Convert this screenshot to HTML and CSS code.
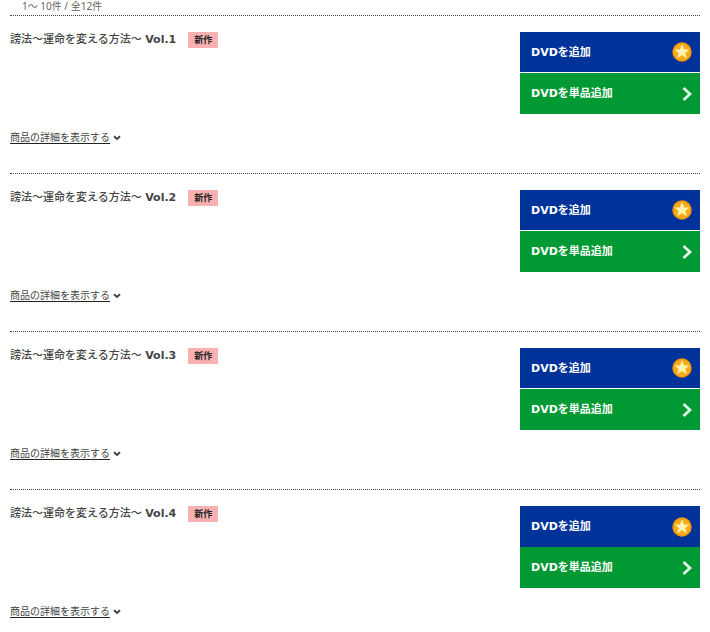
FILE: index.html
```html
<!DOCTYPE html>
<html lang="ja">
<head>
  <meta charset="UTF-8" />
  <meta name="viewport" content="width=device-width, initial-scale=1.0"/>
  <title>DVD一覧</title>
  <link rel="stylesheet" href="styles.css">
</head>
<body>
  <svg class="sprite" aria-hidden="true">
    <symbol id="icon-star" viewBox="0 0 20 20">
      <circle cx="10" cy="10" r="9.7" fill="#f39a0b"/>
      <circle cx="10" cy="10" r="8" fill="#fbac1c"/>
      <path d="M10 2.6l2.1 5h5.3l-4.2 3.4 1.6 5.2-4.8-3.1-4.8 3.1 1.6-5.2-4.2-3.4h5.3z" fill="#fff3b0"/>
    </symbol>
    <symbol id="icon-next" viewBox="0 0 10 14">
      <path d="M1.5 1L8 7l-6.5 6" fill="none" stroke="#e0f5e4" stroke-width="2.8"/>
    </symbol>
    <symbol id="icon-down" viewBox="0 0 8 6">
      <path d="M1 1.2l3 2.8 3-2.8" fill="none" stroke="#444" stroke-width="2"/>
    </symbol>
  </svg>

  <main class="container">
    <p class="count">1〜 10件 / 全12件</p>

    <section class="item">
      <div class="item-info">
        <h2 class="item-title"><span>謗法〜運命を変える方法〜 <b>Vol.1</b></span><span class="badge">新作</span></h2>
        <a class="detail" href="#"><span>商品の詳細を表示する</span><svg class="icon-down"><use href="#icon-down"/></svg></a>
      </div>
      <div class="item-buttons">
        <button type="button" class="btn btn-add">DVDを追加<svg class="icon-star"><use href="#icon-star"/></svg></button>
        <button type="button" class="btn btn-single">DVDを単品追加<svg class="icon-next"><use href="#icon-next"/></svg></button>
      </div>
    </section>

    <section class="item">
      <div class="item-info">
        <h2 class="item-title"><span>謗法〜運命を変える方法〜 <b>Vol.2</b></span><span class="badge">新作</span></h2>
        <a class="detail" href="#"><span>商品の詳細を表示する</span><svg class="icon-down"><use href="#icon-down"/></svg></a>
      </div>
      <div class="item-buttons">
        <button type="button" class="btn btn-add">DVDを追加<svg class="icon-star"><use href="#icon-star"/></svg></button>
        <button type="button" class="btn btn-single">DVDを単品追加<svg class="icon-next"><use href="#icon-next"/></svg></button>
      </div>
    </section>

    <section class="item">
      <div class="item-info">
        <h2 class="item-title"><span>謗法〜運命を変える方法〜 <b>Vol.3</b></span><span class="badge">新作</span></h2>
        <a class="detail" href="#"><span>商品の詳細を表示する</span><svg class="icon-down"><use href="#icon-down"/></svg></a>
      </div>
      <div class="item-buttons">
        <button type="button" class="btn btn-add">DVDを追加<svg class="icon-star"><use href="#icon-star"/></svg></button>
        <button type="button" class="btn btn-single">DVDを単品追加<svg class="icon-next"><use href="#icon-next"/></svg></button>
      </div>
    </section>

    <section class="item">
      <div class="item-info">
        <h2 class="item-title"><span>謗法〜運命を変える方法〜 <b>Vol.4</b></span><span class="badge">新作</span></h2>
        <a class="detail" href="#"><span>商品の詳細を表示する</span><svg class="icon-down"><use href="#icon-down"/></svg></a>
      </div>
      <div class="item-buttons item-buttons-last">
        <button type="button" class="btn btn-add">DVDを追加<svg class="icon-star"><use href="#icon-star"/></svg></button>
        <button type="button" class="btn btn-single">DVDを単品追加<svg class="icon-next"><use href="#icon-next"/></svg></button>
      </div>
    </section>
  </main>
</body>
</html>
```

FILE: styles.css
```css
* {
  margin: 0;
  padding: 0;
  box-sizing: border-box;
}

body {
  font-family: "DejaVu Sans", "Noto Sans CJK JP", sans-serif;
  font-size: 11px;
  background: #fff;
  color: #444;
}

.sprite {
  display: none;
}

.container {
  padding: 0 10px;
}

.count {
  padding: 0 12px 3px;
  font-family: "Noto Sans", "Noto Sans CJK JP", sans-serif;
  font-size: 10px;
  line-height: 12px;
  color: #666;
}

.item {
  display: flex;
  justify-content: space-between;
  border-top: 1px dotted #444;
  padding: 16px 0 29px;
}

.item-info {
  display: flex;
  flex-direction: column;
  justify-content: space-between;
  align-items: flex-start;
}

.item-title {
  display: flex;
  align-items: center;
  gap: 12px;
  font-size: 11px;
  font-weight: 500;
  line-height: 16px;
}

.badge {
  padding: 0 6px;
  background: #f8b0b0;
  color: #222;
  font-size: 9px;
  font-weight: bold;
  line-height: 16px;
}

.detail {
  display: flex;
  align-items: center;
  gap: 3px;
  color: #444;
  font-family: "Noto Sans CJK JP", sans-serif;
  font-size: 10px;
  font-weight: 400;
  line-height: 14px;
  text-decoration: none;
}

.detail span {
  border-bottom: 1px solid #222;
  line-height: 12px;
}

.icon-down {
  width: 8px;
  height: 6px;
}

.item-buttons {
  display: flex;
  flex-direction: column;
  gap: 1px;
  width: 180px;
  margin-bottom: 30px;
}

.btn {
  display: flex;
  justify-content: space-between;
  align-items: center;
  height: 41px;
  padding: 0 8px 3px 11px;
  border: none;
  color: #fff;
  font-family: inherit;
  font-size: 11px;
  font-weight: bold;
  cursor: pointer;
}

.btn svg {
  margin-top: 3px;
}

.btn-add {
  height: 40px;
  background: #003399;
}

.btn-single {
  background: #009933;
}

.item-buttons-last {
  gap: 0;
}

.item-buttons-last .btn-add {
  height: 41px;
}

.icon-star {
  width: 20px;
  height: 20px;
}

.icon-next {
  width: 10px;
  height: 14px;
}
```
